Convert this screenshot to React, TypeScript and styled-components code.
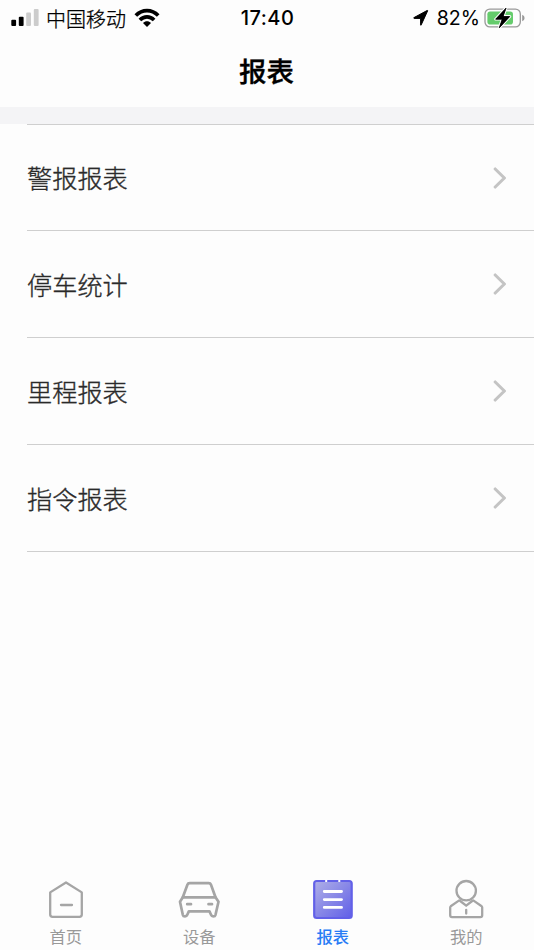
import React from "react";
import styled, { createGlobalStyle } from "styled-components";

const GlobalStyle = createGlobalStyle`
  * { box-sizing: border-box; }
  body { margin: 0; background: #fdfdfd; }
`;

const Screen = styled.div`
  display: flex;
  flex-direction: column;
  width: 534px;
  height: 950px;
  background: #fdfdfd;
  color: #000;
  font-family: Inter, "Noto Sans CJK SC", sans-serif;
  overflow: hidden;
`;

const StatusBar = styled.header`
  display: grid;
  grid-template-columns: 1fr 60px 1fr;
  align-items: center;
  height: 35px;
  flex: none;
  padding: 0 9px 0 10px;
  font-size: 20px;
  line-height: 35px;
  white-space: nowrap;
`;

const StatusGroup = styled.div<{ $end?: boolean }>`
  display: flex;
  align-items: center;
  justify-content: ${(p) => (p.$end ? "flex-end" : "flex-start")};
  height: 35px;
`;

const Carrier = styled.span`
  margin: 0 8px 0 6px;
  font-family: "Noto Sans CJK SC", sans-serif;
  font-weight: 300;
  -webkit-text-stroke: 0.3px #000;
`;

const Clock = styled.time`
  padding-top: 1px;
  text-align: center;
  font-weight: 500;
  font-size: 20px;
  letter-spacing: 0.5px;
`;

const Percent = styled.span`
  margin: 1px 4px 0 8px;
  font-size: 19.6px;
`;

const TitleBar = styled.div`
  flex: none;
  height: 72px;
  padding-right: 1px;
  text-align: center;
  line-height: 70px;
  font-size: 27.5px;
  font-weight: 500;
  font-family: "Noto Sans CJK SC", sans-serif;
`;

const Title = styled.h1`
  margin: 0;
  font: inherit;
  -webkit-text-stroke: 0.3px #000;
`;

const Separator = styled.div`
  flex: none;
  height: 17px;
  background: #f4f4f6;
`;

const List = styled.ul`
  flex: 1;
  margin: 0 0 0 27px;
  padding: 0;
  list-style: none;
  border-top: 1px solid #cfcfcf;
`;

const Item = styled.li`
  display: flex;
  align-items: center;
  justify-content: space-between;
  height: 107px;
  padding-right: 27px;
  border-bottom: 1px solid #cfcfcf;
  color: #2a2a2a;
  font-family: "Noto Sans CJK SC", sans-serif;
  font-size: 25.2px;
  font-weight: 300;

  &:first-child { height: 106px; }
`;

const ItemLabel = styled.span`
  padding-bottom: 1px;
  -webkit-text-stroke: 0.35px #2a2a2a;
`;

const TabBar = styled.nav`
  display: grid;
  grid-template-columns: repeat(4, 1fr);
  flex: none;
  height: 75px;
  margin-right: 1px;
  margin-left: -1px;
`;

const Tab = styled.a<{ $active?: boolean }>`
  display: flex;
  flex-direction: column;
  align-items: center;
  color: ${(p) => (p.$active ? "#287cf5" : "#999")};
  font-family: "Noto Sans CJK SC", sans-serif;
  font-size: 16.3px;
  font-weight: ${(p) => (p.$active ? 500 : 400)};
  line-height: 22px;

  svg { display: block; }
`;

const Signal = () => (
  <svg width="30" height="20" viewBox="10 7 30 20">
    <rect x="11.3" y="18.8" width="4.8" height="6.2" rx="1" />
    <rect x="18.8" y="15.8" width="4.8" height="9.2" rx="1" />
    <rect x="26.2" y="11.5" width="4.8" height="13.5" rx="1" fill="#ccc" />
    <rect x="33.8" y="8" width="4.8" height="17" rx="1" fill="#ccc" />
  </svg>
);

const Wifi = () => (
  <svg width="26" height="20" viewBox="0 0 26 20">
    <g fill="none" stroke="#000" strokeWidth="3.7">
      <path d="M1.8 7.5C8.2.9 17.8.9 24.2 7.5" />
      <path d="M5.9 12C10 7.8 16 7.8 20.1 12" />
    </g>
    <path d="M9 14.9C11.3 12.7 14.7 12.7 17 14.9L13 19Z" />
  </svg>
);

const Location = () => (
  <svg width="17" height="18" viewBox="0 0 17 18">
    <path
      d="M15.6 1.9L9.2 15.9Q8.8 16.6 8.6 15.9V9.4H2.1Q1.2 9.1 2 8.6L15.1 1.5Q15.9 1.3 15.6 1.9Z"
      stroke="#000"
      strokeWidth="1"
      strokeLinejoin="round"
    />
  </svg>
);

const Battery = () => (
  <svg width="41" height="24" viewBox="484 4.5 41 24">
    <rect x="485" y="7.6" width="35.3" height="17.8" rx="4.8" fill="none" stroke="#999" strokeWidth="1.3" />
    <path d="M522.2 13.3Q524.6 14.2 524.6 16.5T522.2 19.7Z" fill="#999" />
    <rect x="487.4" y="10" width="25.6" height="13" rx="2.8" fill="#65cc6c" />
    <path
      d="M506.1 6.5L495.6 17.7H502.2L499.2 26.4L509.8 15H503.1Z"
      fill="#000"
      stroke="#fdfdfd"
      strokeWidth="2.8"
      strokeLinejoin="round"
      paintOrder="stroke"
    />
    <path
      d="M506.1 6.5L495.6 17.7H502.2L499.2 26.4L509.8 15H503.1Z"
      stroke="#000"
      strokeWidth="0.7"
      strokeLinejoin="round"
    />
  </svg>
);

const Chevron = () => (
  <svg width="14" height="22" viewBox="0 0 14 22">
    <path d="M2.2 2L11.4 11L2.2 20" fill="none" stroke="#c4c4c4" strokeWidth="3.1" strokeLinecap="round" strokeLinejoin="round" />
  </svg>
);

const outline = {
  fill: "none",
  stroke: "#a5a5a5",
  strokeWidth: 2.3,
  strokeLinecap: "round" as const,
  strokeLinejoin: "round" as const,
};

const HomeIcon = () => (
  <svg width="44" height="50" viewBox="44 875 44 50">
    <g {...outline}>
      <path d="M50.2 892.4L66 882.5L81.8 892.4V914.5Q81.8 916.8 79.5 916.8H52.5Q50.2 916.8 50.2 914.5Z" />
      <path d="M61 905H72" />
    </g>
  </svg>
);

const CarIcon = () => (
  <svg width="44" height="50" viewBox="177 875 44 50">
    <g {...outline} strokeWidth={2.7}>
      <path d="M182.8 897.3L187.4 884.8Q188 883.2 189.7 883.2H208.7Q210.4 883.2 211 884.8L215.5 897.3Z" />
      <path d="M182.8 897.3L180 901.7L182.8 914.8Q183.2 916.3 185 916.3Q186.7 916.3 187.3 914.7L188.8 911.4H209.5L211 914.7Q211.6 916.3 213.3 916.3Q215.1 916.3 215.5 914.8L218.5 901.7L215.5 897.3" />
      <path d="M187.2 904.2H191M208.5 904.2H212" />
    </g>
  </svg>
);

const ReportIcon = () => (
  <svg width="44" height="50" viewBox="311 875 44 50">
    <defs>
      <linearGradient id="reportFill" x1="0" y1="0" x2="1" y2="1">
        <stop offset="0" stopColor="#b0b0e6" />
        <stop offset="1" stopColor="#605fe8" />
      </linearGradient>
    </defs>
    <rect x="314.2" y="881" width="37.5" height="37" rx="2.5" fill="url(#reportFill)" stroke="#6260e8" strokeWidth="2.2" />
    <path d="M326.2 879V882M339.3 879V882" stroke="#fdfdfd" strokeWidth="2" />
    <path d="M324.3 891.5H341.5M324.3 899.6H341.5M324.3 907.4H341.5" stroke="#fff" strokeWidth="2.9" strokeLinecap="round" />
  </svg>
);

const ProfileIcon = () => (
  <svg width="44" height="50" viewBox="444 875 44 50">
    <g {...outline}>
      <circle cx="466.2" cy="890.7" r="9.7" />
      <path d="M459.2 900.4L450.7 906.3Q450.2 906.7 450.2 907.5V915.3Q450.2 917.2 452 917.2H480.4Q482.2 917.2 482.2 915.3V907.5Q482.2 906.7 481.7 906.3L473.2 900.4" />
      <path d="M460.2 901L466.2 905.7L472.2 901M466.2 909.8V913.6" />
    </g>
  </svg>
);

const reports = ["警报报表", "停车统计", "里程报表", "指令报表"];

const tabs = [
  { label: "首页", Icon: HomeIcon },
  { label: "设备", Icon: CarIcon },
  { label: "报表", Icon: ReportIcon, active: true },
  { label: "我的", Icon: ProfileIcon },
];

export default function App() {
  return (
    <Screen>
      <GlobalStyle />
      <StatusBar>
        <StatusGroup>
          <Signal />
          <Carrier>中国移动</Carrier>
          <Wifi />
        </StatusGroup>
        <Clock>17:40</Clock>
        <StatusGroup $end>
          <Location />
          <Percent>82%</Percent>
          <Battery />
        </StatusGroup>
      </StatusBar>
      <TitleBar>
        <Title>报表</Title>
      </TitleBar>
      <Separator />
      <List>
        {reports.map((label) => (
          <Item key={label}>
            <ItemLabel>{label}</ItemLabel>
            <Chevron />
          </Item>
        ))}
      </List>
      <TabBar>
        {tabs.map(({ label, Icon, active }) => (
          <Tab key={label} $active={active}>
            <Icon />
            <span>{label}</span>
          </Tab>
        ))}
      </TabBar>
    </Screen>
  );
}
